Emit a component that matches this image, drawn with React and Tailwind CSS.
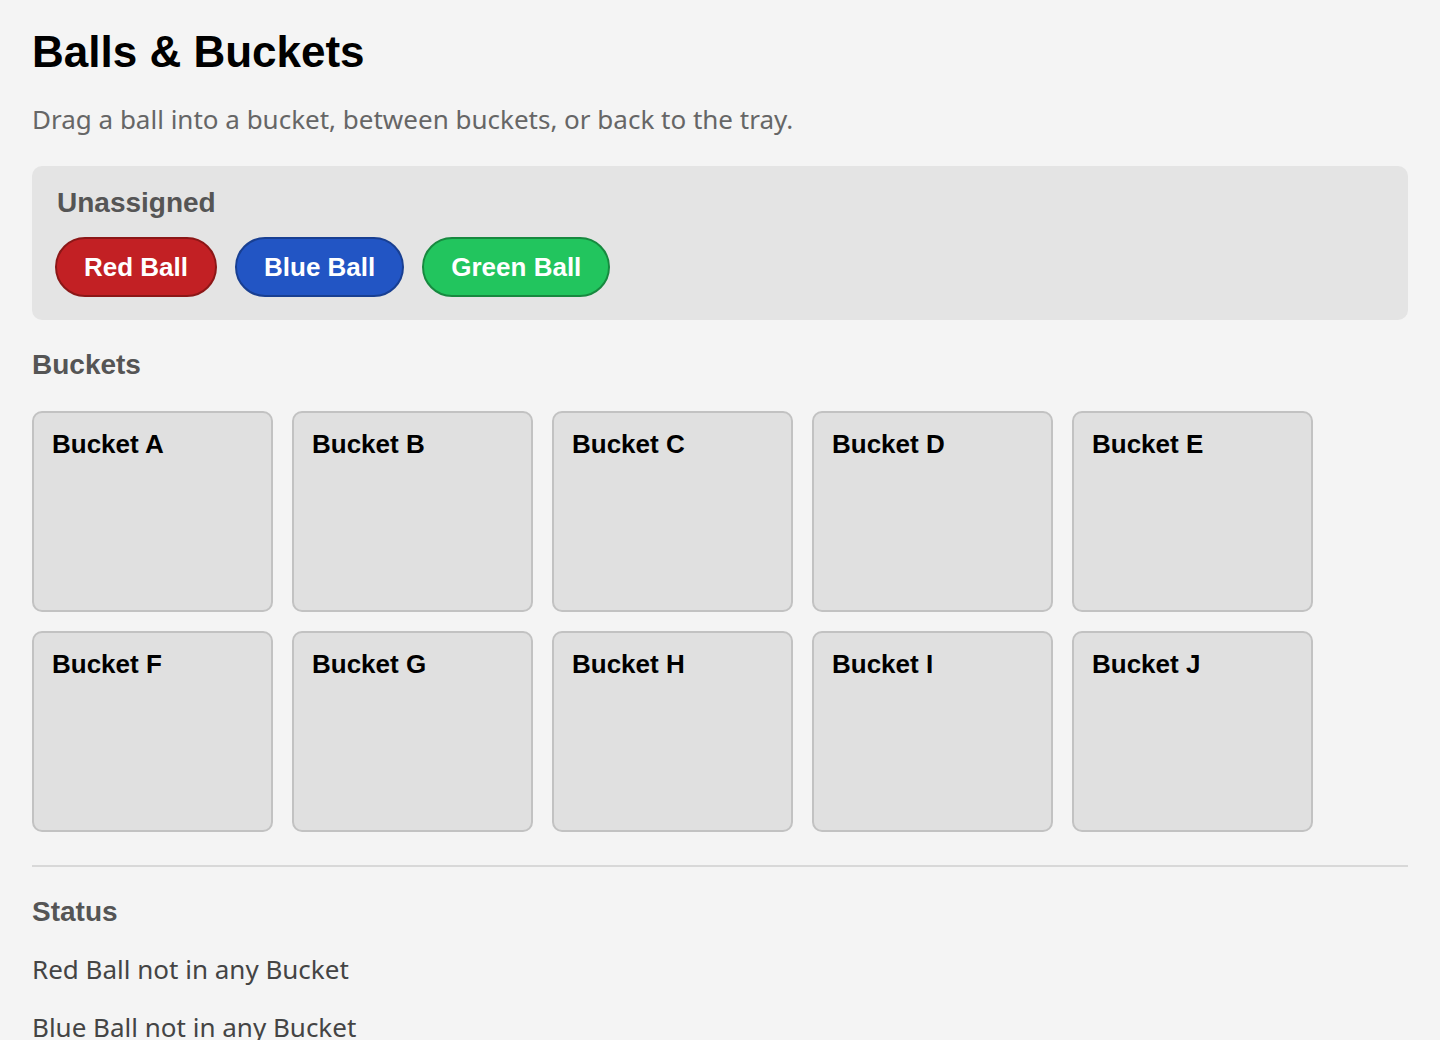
import React, { useState } from "react";

const BALLS = [
  { id: "red", label: "Red Ball", cls: "bg-[#c22024] border-[#8c1717]" },
  { id: "blue", label: "Blue Ball", cls: "bg-[#2255c4] border-[#183f92]" },
  { id: "green", label: "Green Ball", cls: "bg-[#22c55e] border-[#17893f]" },
];

const BUCKETS = ["A", "B", "C", "D", "E", "F", "G", "H", "I", "J"];

const heading = "font-['Liberation_Sans',Arial,sans-serif] font-bold";
const body = "font-['Noto_Sans',sans-serif]";

const Ball = ({ ball, onDragStart }) => (
  <div
    draggable
    onDragStart={(e) => onDragStart(e, ball.id)}
    className={`${heading} ${ball.cls} h-[60px] px-[27px] flex items-center rounded-full border-2 text-white text-[26px] leading-none cursor-grab select-none`}
  >
    {ball.label}
  </div>
);

export default function App() {
  // ball id -> bucket letter, or null when it sits in the tray
  const [placement, setPlacement] = useState({ red: null, blue: null, green: null });

  const handleDragStart = (e, id) => {
    e.dataTransfer.setData("text/plain", id);
  };

  const dropInto = (target) => (e) => {
    e.preventDefault();
    const id = e.dataTransfer.getData("text/plain");
    if (!id) return;
    setPlacement((prev) => ({ ...prev, [id]: target }));
  };

  const allowDrop = (e) => e.preventDefault();

  const inTray = BALLS.filter((b) => placement[b.id] === null);

  return (
    <div className="min-h-screen bg-[#f4f4f4] px-8 pt-[30px] pb-10">
      <h1 className={`${heading} text-[44px] leading-[44px] text-black`}>Balls &amp; Buckets</h1>
      <p className={`${body} mt-[29px] text-[26px] leading-[32px] text-[#666]`}>
        Drag a ball into a bucket, between buckets, or back to the tray.
      </p>

      {/* tray for balls that are in no bucket */}
      <div
        onDragOver={allowDrop}
        onDrop={dropInto(null)}
        className="mt-[31px] rounded-[10px] bg-[#e4e4e4] px-[23px] pt-[21px] pb-[23px]"
      >
        <h2 className={`${heading} pl-[2px] text-[28px] leading-[32px] text-[#555]`}>Unassigned</h2>
        <div className="mt-[18px] flex gap-[18px] min-h-[60px]">
          {inTray.map((b) => (
            <Ball key={b.id} ball={b} onDragStart={handleDragStart} />
          ))}
        </div>
      </div>

      <h2 className={`${heading} mt-[29px] text-[28px] leading-[32px] text-[#555]`}>Buckets</h2>
      <div className="mt-[30px] grid grid-cols-[repeat(5,241px)] gap-[19px]">
        {BUCKETS.map((letter) => (
          <div
            key={letter}
            onDragOver={allowDrop}
            onDrop={dropInto(letter)}
            className="h-[201px] rounded-[10px] border-2 border-[#c2c2c2] bg-[#e0e0e0] pt-4 pl-[18px] pr-4 pb-4"
          >
            <h3 className={`${heading} text-[26px] leading-[30px] text-black`}>Bucket {letter}</h3>
            <div className="mt-3 flex flex-wrap gap-2">
              {BALLS.filter((b) => placement[b.id] === letter).map((b) => (
                <Ball key={b.id} ball={b} onDragStart={handleDragStart} />
              ))}
            </div>
          </div>
        ))}
      </div>

      <hr className="mt-[33px] border-0 border-t-2 border-[#d8d8d8]" />

      <h2 className={`${heading} mt-[29px] text-[28px] leading-[32px] text-[#555]`}>Status</h2>
      <div className={`${body} mt-[25px] flex flex-col gap-[26px] text-[26px] leading-[32px] text-[#444]`}>
        {BALLS.map((b) => (
          <p key={b.id}>
            {placement[b.id] ? `${b.label} in Bucket ${placement[b.id]}` : `${b.label} not in any Bucket`}
          </p>
        ))}
      </div>
    </div>
  );
}
